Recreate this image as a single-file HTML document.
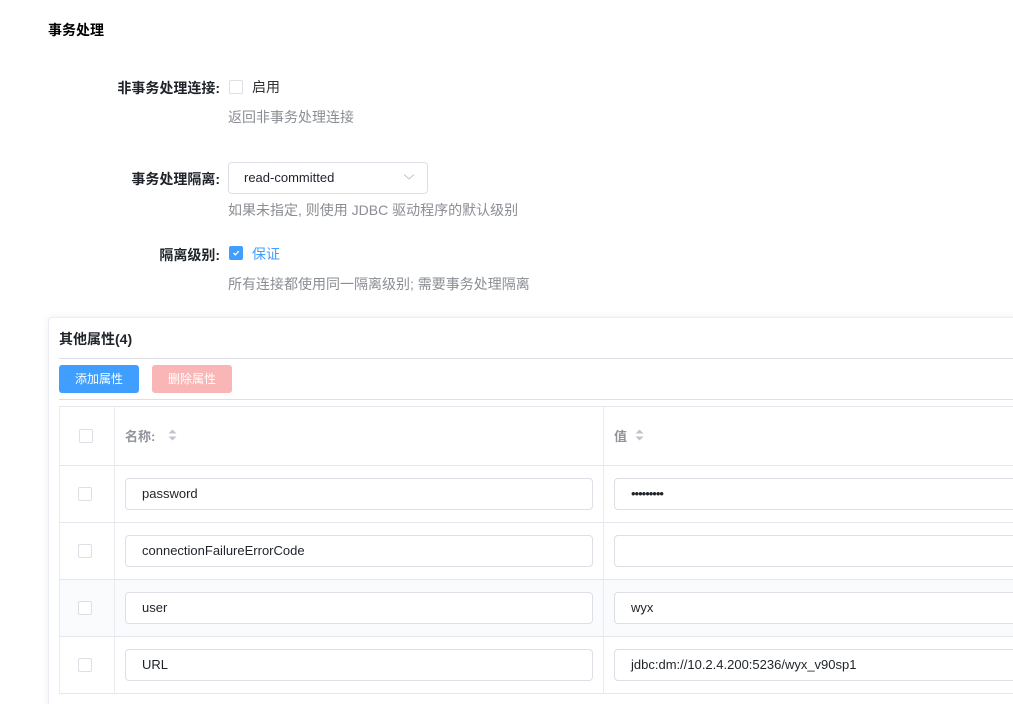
<!DOCTYPE html>
<html><head><meta charset="utf-8"><style>
*{box-sizing:border-box;margin:0;padding:0}
html,body{width:1013px;height:704px;overflow:hidden}
body{background:#fff;font-family:"Liberation Sans","Noto Sans CJK SC",sans-serif;font-size:14px;color:#303133;position:relative}
.a{position:absolute;white-space:nowrap}
.lbl{font-weight:bold;color:#1f2329;text-align:right;width:200px}
.hint{color:#8a8d93}
.cb{position:absolute;width:14px;height:14px;border:1px solid #dcdfe6;border-radius:2px;background:#fff}
.inp{position:absolute;height:32px;border:1px solid #dcdfe6;border-radius:4px;background:#fff;padding-left:16px;line-height:30px;color:#1f2329;font-size:13px}
.hl{position:absolute;height:1px;background:#e4e7ed}
.vl{position:absolute;width:1px;background:#e9ebf0}
</style></head><body>
<div class="a" style="left:48px;top:20px;font-weight:bold;color:#000">事务处理</div>

<div class="a lbl" style="left:20px;top:78px">非事务处理连接:</div>
<div class="cb" style="left:229px;top:80px"></div>
<div class="a" style="left:252px;top:77px">启用</div>
<div class="a hint" style="left:228px;top:107px">返回非事务处理连接</div>

<div class="a lbl" style="left:20px;top:169px">事务处理隔离:</div>
<div class="inp" style="left:228px;top:162px;width:200px;height:32px;padding-left:15px">read-committed</div>
<svg class="a" style="left:403px;top:173px" width="12" height="8" viewBox="0 0 12 8"><path d="M1 1.5L6 6L11 1.5" fill="none" stroke="#c0c4cc" stroke-width="1"/></svg>
<div class="a hint" style="left:228px;top:200px">如果未指定, 则使用 JDBC 驱动程序的默认级别</div>

<div class="a lbl" style="left:20px;top:245px">隔离级别:</div>
<div class="cb" style="left:229px;top:246px;background:#409eff;border-color:#409eff"></div>
<svg class="a" style="left:231px;top:248px" width="10" height="10" viewBox="0 0 10 10"><path d="M2.5 5L4.3 6.8L7.8 3.2" fill="none" stroke="#fff" stroke-width="1.3"/></svg>
<div class="a" style="left:252px;top:244px;color:#409eff">保证</div>
<div class="a hint" style="left:228px;top:274px">所有连接都使用同一隔离级别; 需要事务处理隔离</div>

<div class="a" style="left:48px;top:317px;width:980px;height:400px;border:1px solid #ebeef5;border-radius:4px;box-shadow:0 0 8px rgba(0,0,0,0.06);background:#fff"></div>
<div class="a" style="left:59px;top:329px;font-weight:bold;color:#1f2329">其他属性(4)</div>
<div class="hl" style="left:59px;top:358px;width:960px;background:#dcdfe6"></div>
<div class="a" style="left:59px;top:365px;width:80px;height:28px;background:#409eff;border-radius:3px;color:#fff;font-size:12px;text-align:center;line-height:28px">添加属性</div>
<div class="a" style="left:152px;top:365px;width:80px;height:28px;background:#fab6b6;border-radius:3px;color:#fff;font-size:12px;text-align:center;line-height:28px">删除属性</div>
<div class="hl" style="left:59px;top:399px;width:960px;background:#dcdfe6"></div>

<div class="a" style="left:59px;top:579px;width:960px;height:57px;background:#fafbfd"></div>
<div class="hl" style="left:59px;top:406px;width:960px"></div>
<div class="hl" style="left:59px;top:465px;width:960px"></div>
<div class="hl" style="left:59px;top:522px;width:960px"></div>
<div class="hl" style="left:59px;top:579px;width:960px"></div>
<div class="hl" style="left:59px;top:636px;width:960px"></div>
<div class="hl" style="left:59px;top:693px;width:960px"></div>
<div class="vl" style="left:59px;top:406px;height:288px"></div>
<div class="vl" style="left:114px;top:406px;height:288px"></div>
<div class="vl" style="left:603px;top:406px;height:288px"></div>

<div class="cb" style="left:79px;top:429px"></div>
<div class="a" style="left:125px;top:426px;font-weight:bold;color:#909399;font-size:13px">名称:</div>
<svg class="a" style="left:168px;top:429px" width="9" height="12" viewBox="0 0 9 12"><path d="M4.5 0.5L8.5 4.5H0.5Z M4.5 11.5L8.5 7.5H0.5Z" fill="#c0c4cc"/></svg>
<div class="a" style="left:614px;top:426px;font-weight:bold;color:#909399;font-size:13px">值</div>
<svg class="a" style="left:635px;top:429px" width="9" height="12" viewBox="0 0 9 12"><path d="M4.5 0.5L8.5 4.5H0.5Z M4.5 11.5L8.5 7.5H0.5Z" fill="#c0c4cc"/></svg>

<div class="cb" style="left:78px;top:487px"></div>
<div class="inp" style="left:125px;top:478px;width:468px">password</div>
<div class="inp" style="left:614px;top:478px;width:410px;letter-spacing:-1px">•••••••••</div>

<div class="cb" style="left:78px;top:544px"></div>
<div class="inp" style="left:125px;top:535px;width:468px">connectionFailureErrorCode</div>
<div class="inp" style="left:614px;top:535px;width:410px"></div>

<div class="cb" style="left:78px;top:601px"></div>
<div class="inp" style="left:125px;top:592px;width:468px">user</div>
<div class="inp" style="left:614px;top:592px;width:410px">wyx</div>

<div class="cb" style="left:78px;top:658px"></div>
<div class="inp" style="left:125px;top:649px;width:468px">URL</div>
<div class="inp" style="left:614px;top:649px;width:410px">jdbc:dm://10.2.4.200:5236/wyx_v90sp1</div>
</body></html>
